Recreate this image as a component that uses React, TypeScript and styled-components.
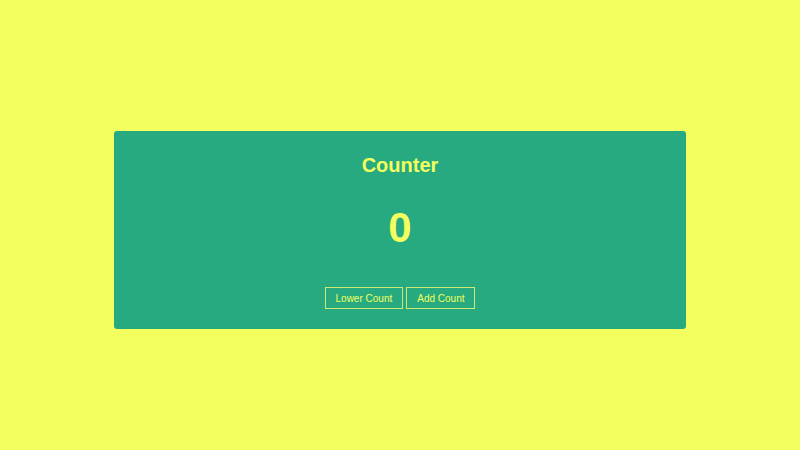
import React, { useState } from "react";
import styled, { createGlobalStyle } from "styled-components";

const Global = createGlobalStyle`
  html, body { margin: 0; padding: 0; }
  body {
    background: #f2ff5e;
    font-family: "Liberation Sans", Arial, sans-serif;
    height: 450px;
  }
`;

const Page = styled.div`
  display: flex;
  justify-content: center;
  padding-top: 131px;
`;

const Card = styled.div`
  width: 572px;
  height: 198px;
  box-sizing: border-box;
  background: #27aa80;
  border-radius: 3px;
  display: flex;
  flex-direction: column;
  align-items: center;
  padding-top: 22px;
  color: #f2ff5e;
`;

const Title = styled.h2`
  margin: 0;
  font-size: 20px;
  line-height: 24px;
  font-weight: bold;
`;

const Count = styled.div`
  margin-top: 27px;
  font-size: 42px;
  line-height: 48px;
  font-weight: bold;
`;

const Buttons = styled.div`
  margin-top: 35px;
  display: flex;
  gap: 3px;
`;

const Button = styled.button`
  font-family: "Liberation Sans", Arial, sans-serif;
  font-size: 10px;
  height: 22px;
  padding: 0 10px;
  background: transparent;
  color: #f2ff5e;
  border: 1px solid #cde776;
  cursor: pointer;
`;

export default function App() {
  const [count, setCount] = useState(0);
  return (
    <>
      <Global />
      <Page>
        <Card>
          <Title>Counter</Title>
          <Count>{count}</Count>
          <Buttons>
            <Button onClick={() => setCount(count - 1)}>Lower Count</Button>
            <Button onClick={() => setCount(count + 1)}>Add Count</Button>
          </Buttons>
        </Card>
      </Page>
    </>
  );
}
